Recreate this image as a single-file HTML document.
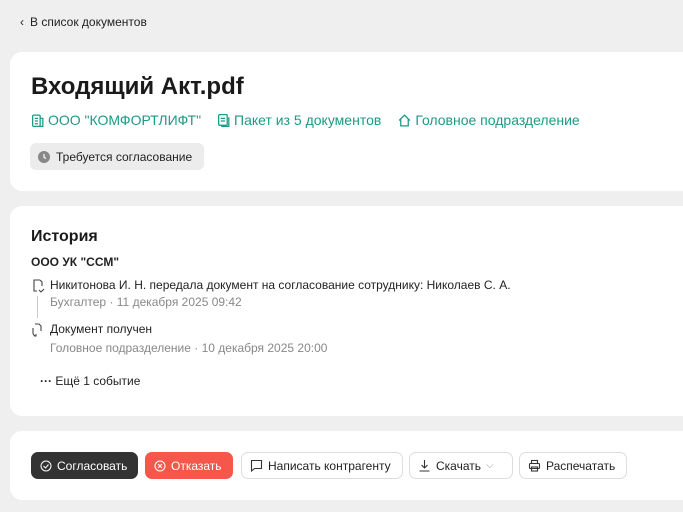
<!DOCTYPE html>
<html><head><meta charset="utf-8"><style>
*{box-sizing:border-box;margin:0;padding:0}
body{width:683px;height:512px;overflow:hidden;background:#efefef;font-family:"Liberation Sans",sans-serif;color:#222;position:relative}
.abs{position:absolute;white-space:nowrap}
.card{position:absolute;left:10px;width:700px;background:#fff;border-radius:12px}
.link{color:#1c9a86;font-size:14px}
.btn{position:absolute;top:452px;height:27px;border-radius:7px;border:1px solid #ddd;background:#fff;font-size:12px;display:flex;align-items:center;gap:5px;padding-left:8px;color:#222}
svg{flex:none}
</style></head><body>
<div class="abs" style="left:20px;top:15px;font-size:12px"><span style="font-size:12px;margin-right:6px">‹</span>В список документов</div>

<div class="card" style="top:52px;height:139px"></div>
<div class="abs" style="left:31px;top:73px;font-size:24px;font-weight:bold;color:#1a1a1a">Входящий Акт.pdf</div>
<div class="abs link" style="left:31px;top:112px;display:flex;align-items:center;gap:3px">
<svg width="14" height="15" viewBox="0 0 13 14" fill="none" stroke="#1c9a86" stroke-width="1.2"><rect x="1.5" y="2" width="7" height="10.5" rx="1"/><path d="M8.5 5h2.5v7.5H8.5M3.5 5h3M3.5 7.5h3M3.5 10h3"/></svg>ООО "КОМФОРТЛИФТ"
<span style="width:10px"></span>
<svg width="14" height="15" viewBox="0 0 13 14" fill="none" stroke="#1c9a86" stroke-width="1.2"><rect x="1.5" y="1.5" width="8" height="10" rx="1"/><path d="M11 4v8.5H4M3.5 5h4M3.5 7.5h4"/></svg>Пакет из 5 документов
<span style="width:10px"></span>
<svg width="15" height="15" viewBox="0 0 14 14" fill="none" stroke="#1c9a86" stroke-width="1.2"><path d="M2 7L7 2l5 5M3.5 6v6h7V6"/></svg>Головное подразделение</div>
<div class="abs" style="left:30px;top:143px;width:174px;height:27px;background:#ececec;border-radius:6px;font-size:12px;display:flex;align-items:center;padding-left:8px;gap:6px">
<svg width="12" height="12" viewBox="0 0 12 12"><circle cx="6" cy="6" r="6" fill="#888"/><path d="M6 3v3.3l2 1.2" stroke="#fff" stroke-width="1.2" fill="none"/></svg>Требуется согласование</div>

<div class="card" style="top:206px;height:210px"></div>
<div class="abs" style="left:31px;top:228px;font-size:16px;font-weight:bold;color:#1a1a1a">История</div>
<div class="abs" style="left:31px;top:255px;font-size:12px;font-weight:bold">ООО УК "ССМ"</div>
<svg class="abs" style="left:31px;top:278px" width="14" height="16" viewBox="0 0 14 16" fill="none" stroke="#444" stroke-width="1.1"><path d="M9 2H3v11h3M9 2l2 2v4M8 12l2 2 3-3"/></svg>
<div class="abs" style="left:50px;top:278px;font-size:12px">Никитонова И. Н. передала документ на согласование сотруднику: Николаев С. А.</div>
<div class="abs" style="left:37px;top:296px;width:1px;height:22px;background:#ccc"></div>
<div class="abs" style="left:50px;top:295px;font-size:12px;color:#888">Бухгалтер · 11 декабря 2025 09:42</div>
<svg class="abs" style="left:30px;top:322px" width="14" height="16" viewBox="0 0 14 16" fill="none" stroke="#444" stroke-width="1.1"><path d="M5 2h4l2 2v5M3 6v5a3 3 0 0 0 3 3M4 14l2 0 0-2"/></svg>
<div class="abs" style="left:50px;top:322px;font-size:12px">Документ получен</div>
<div class="abs" style="left:50px;top:341px;font-size:12px;color:#888">Головное подразделение · 10 декабря 2025 20:00</div>
<div class="abs" style="left:40px;top:374px;font-size:12px"><b>···</b> Ещё 1 событие</div>

<div class="card" style="top:431px;height:69px"></div>
<div class="btn" style="left:31px;width:107px;background:#333;border-color:#333;color:#fff"><svg width="12" height="12" viewBox="0 0 12 12" fill="none" stroke="#fff" stroke-width="1"><circle cx="6" cy="6" r="5"/><path d="M3.5 6l2 2 3-3.5"/></svg>Согласовать</div>
<div class="btn" style="left:145px;width:88px;background:#f5574a;border-color:#f5574a;color:#fff"><svg width="12" height="12" viewBox="0 0 12 12" fill="none" stroke="#fff" stroke-width="1"><circle cx="6" cy="6" r="5"/><path d="M4 4l4 4M8 4l-4 4"/></svg>Отказать</div>
<div class="btn" style="left:241px;width:162px"><svg width="13" height="13" viewBox="0 0 13 13" fill="none" stroke="#333" stroke-width="1.1"><path d="M1.5 1.5h10v8h-7l-3 2.5z"/></svg>Написать контрагенту</div>
<div class="btn" style="left:409px;width:104px"><svg width="13" height="13" viewBox="0 0 13 13" fill="none" stroke="#333" stroke-width="1.1"><path d="M6.5 1v8M3.5 6l3 3 3-3M1.5 12h10"/></svg>Скачать <span style="color:#999;font-size:10px">⌵</span></div>
<div class="btn" style="left:519px;width:108px"><svg width="13" height="13" viewBox="0 0 13 13" fill="none" stroke="#333" stroke-width="1.1"><rect x="3.5" y="1.5" width="6" height="3"/><rect x="1.5" y="4.5" width="10" height="5" rx="1"/><rect x="3.5" y="8" width="6" height="4"/></svg>Распечатать</div>
</body></html>
